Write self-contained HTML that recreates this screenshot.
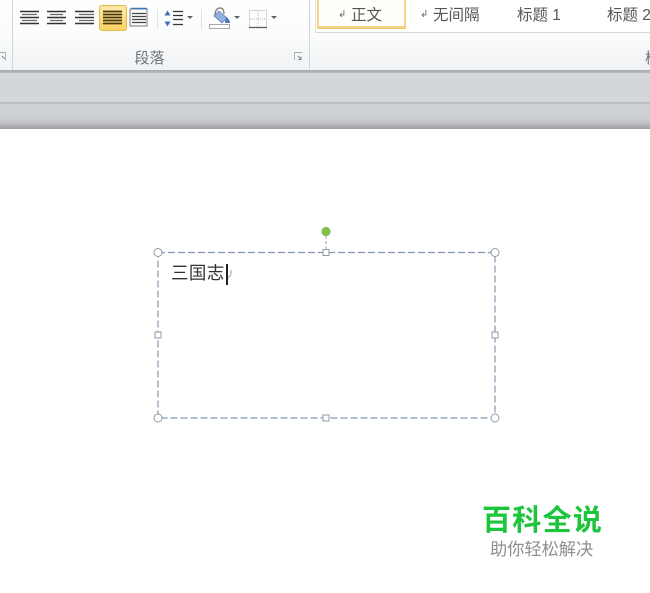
<!DOCTYPE html>
<html>
<head>
<meta charset="utf-8">
<style>
html,body{margin:0;padding:0;background:#fff}
body{width:650px;height:593px;overflow:hidden;position:relative;font-family:"Liberation Sans","Noto Sans CJK SC",sans-serif}
.a{position:absolute;white-space:nowrap}
</style>
</head>
<body>
<div class="a" style="left:0;top:0;width:650px;height:70px;background:linear-gradient(#fefefe 0,#fbfcfc 35px,#f0f2f4 70px)"></div>
<div class="a" style="left:0;top:70px;width:650px;height:3px;background:linear-gradient(#a6aaaf,#b8bcc0)"></div>
<div class="a" style="left:0;top:73px;width:650px;height:30px;background:#d3d6da"></div>
<div class="a" style="left:0;top:102px;width:650px;height:2px;background:#bcc0c4"></div>
<div class="a" style="left:0;top:104px;width:650px;height:25px;background:linear-gradient(#d0d3d6 0,#ccced1 14px,#c1c3c6 19px,#9b9d9f 25px)"></div>
<div class="a" style="left:12px;top:0;width:1px;height:70px;background:#d2d5d9"></div>
<div class="a" style="left:309px;top:0;width:1px;height:70px;background:#d2d5d9"></div>
<div class="a" style="left:315px;top:0;width:335px;height:32px;background:#fff;border-left:1px solid #e0e2e5;border-bottom:1px solid #d5d8dc"></div>
<div class="a" style="left:317px;top:-3px;width:85px;height:27px;border:2px solid #f3d587;border-radius:1px;background:#fffefa;box-shadow:0 1px 0 #e9c36a"></div>

<svg class="a" style="left:0;top:0" width="320" height="70" viewBox="0 0 320 70">
<defs><linearGradient id="g" x1="0" y1="0" x2="0" y2="1"><stop offset="0" stop-color="#fde9a8"/><stop offset="1" stop-color="#fcd364"/></linearGradient></defs>
<g stroke="#333" stroke-width="1.500" fill="none">
<path d="M20 11.500h19M20 17.500h19M20 23.500h19"/>
<path d="M22 14.500h15M22 20.500h15" stroke="#666" stroke-width="1.300"/>
<path d="M47 11.500h19M47 17.500h19M47 23.500h19"/>
<path d="M50 14.500h13M50 20.500h13" stroke="#666" stroke-width="1.300"/>
<path d="M75 11.500h19M75 17.500h19M75 23.500h19"/>
<path d="M79 14.500h15M79 20.500h15" stroke="#666" stroke-width="1.300"/>
</g>
<rect x="99.500" y="5.500" width="27" height="25" rx="2.500" fill="url(#g)" stroke="#e2b951"/>
<g stroke="#4a3a10" stroke-width="1.800" fill="none">
<path d="M103 11.500h19M103 14.500h19M103 17.500h19M103 20.500h19M103 23.500h19"/>
</g>
<g fill="none">
<rect x="130" y="9" width="17" height="17" stroke="#777" stroke-width="1"/>
<path d="M131 8.500h16" stroke="#3e78b5" stroke-width="1.500"/>
<path d="M132 13.500h14M132 16.500h14M132 19.500h14M132 22.500h14" stroke="#444" stroke-width="1.300"/>
</g>
<path d="M157.500 9v20M201.500 9v20" stroke="#dfe1e4" fill="none"/>
<path d="M167.500 10.500l3 5h-6zM167.500 26.500l3-5h-6z" fill="#3b71b8"/>
<path d="M173 11.500h10M173 15.500h10M173 19.500h10M173 24.500h10" stroke="#333" stroke-width="1.300" fill="none"/>
<path d="M187 16h6l-3 3zM234 16h6l-3 3zM271 16h6l-3 3z" fill="#5e6670"/>
<path d="M219 11l8 7-5 5-8-7z" fill="#8fb0e0" stroke="#5f7fb0" stroke-width=".8"/>
<path d="M215 15c0-4 2-7 5-7s4 3 4 6" fill="none" stroke="#777" stroke-width="1.200"/>
<path d="M226 17c3 2 4 4 4 6h-5z" fill="#4d76b8"/>
<rect x="209.500" y="24.500" width="20" height="4" fill="#fff" stroke="#a5a8ad"/>
<rect x="249.500" y="10.500" width="17" height="17" fill="none" stroke="#a9adb3" stroke-dasharray="1 1"/>
<path d="M258 11v16M250 19h16" stroke="#b4b7bc" stroke-dasharray="1 1" fill="none"/>
<path d="M249 27.500h18" stroke="#55595f" stroke-width="1.300" fill="none"/>
<g fill="none" stroke="#a8adb3" stroke-width=".9">
<path d="M294.500 60V52.500h7.500"/>
<path d="M298 56l3 3M301 56.500v3h-3" stroke="#7f858c"/>
<path d="M0 52.500h5.500V60"/>
<path d="M2 56l3 3" stroke="#7f858c"/>
</g>
</svg>

<div class="a" style="left:134.500px;top:50px;font-size:15px;line-height:18px;color:#6d737a">段落</div>
<div class="a" style="left:645px;top:50px;font-size:15px;line-height:18px;color:#6d737a">样</div>

<div class="a" style="left:338px;top:7px;font-size:10px;line-height:16px;color:#666">↲</div>
<div class="a" style="left:351px;top:7px;font-size:15.500px;line-height:18px;color:#555">正文</div>
<div class="a" style="left:420px;top:7px;font-size:10px;line-height:16px;color:#666">↲</div>
<div class="a" style="left:433px;top:7px;font-size:15.500px;line-height:18px;color:#555">无间隔</div>
<div class="a" style="left:517px;top:7px;font-size:15.500px;line-height:18px;color:#555">标题 1</div>
<div class="a" style="left:607px;top:7px;font-size:15.500px;line-height:18px;color:#555">标题 2</div>

<svg class="a" style="left:145px;top:220px" width="365" height="210" viewBox="145 220 365 210">
<rect x="158" y="252.500" width="337" height="165.500" fill="none" stroke="#8398ae" stroke-width="1.200" stroke-dasharray="7 3"/>
<path d="M326 236v16" stroke="#9aa8b5" stroke-dasharray="3 2" fill="none"/>
<circle cx="326" cy="231.500" r="4.300" fill="#7fc242" stroke="#9ab98a" stroke-width=".8"/>
<g fill="#fff" stroke="#8f9ba8" stroke-width="1">
<circle cx="158" cy="252.500" r="4"/><circle cx="495" cy="252.500" r="4"/>
<circle cx="158" cy="418" r="4"/><circle cx="495" cy="418" r="4"/>
<rect x="323" y="249.500" width="6" height="6"/><rect x="323" y="415" width="6" height="6"/>
<rect x="155" y="332" width="6" height="6"/><rect x="492" y="332" width="6" height="6"/>
</g>
<path d="M231 270v4c0 2-2 3-4 3l1.500 1.500" fill="none" stroke="#999" stroke-width=".9"/>
<rect x="226" y="264" width="2" height="21" fill="#222"/>
</svg>
<div class="a" style="left:171px;top:263px;font-size:17.500px;line-height:21px;color:#333;letter-spacing:.4px">三国志</div>

<div class="a" style="left:482px;top:503px;font-size:29px;line-height:36px;font-weight:700;color:#1cc53c;letter-spacing:1.300px">百科全说</div>
<div class="a" style="left:490px;top:539px;font-size:17.200px;line-height:21px;color:#8f8f8f">助你轻松解决</div>
</body>
</html>
